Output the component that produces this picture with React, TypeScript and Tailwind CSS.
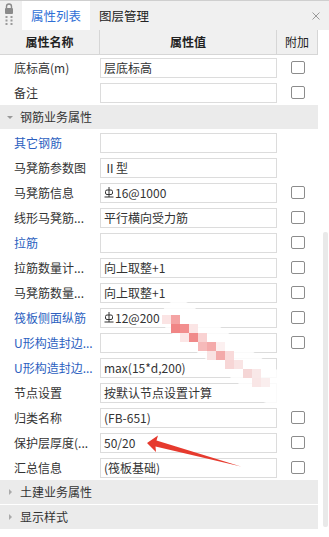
import React from "react";

type Row = {
  label: string;
  value: string;
  blue?: boolean;
  rebar?: boolean;
  check: boolean;
};

const baseRows: Row[] = [
  { label: "底标高(m)", value: "层底标高", check: true },
  { label: "备注", value: "", check: true },
];

const rebarRows: Row[] = [
  { label: "其它钢筋", value: "", blue: true, check: false },
  { label: "马凳筋参数图", value: "Ⅱ型", check: false },
  { label: "马凳筋信息", value: "16@1000", rebar: true, check: true },
  { label: "线形马凳筋...", value: "平行横向受力筋", check: true },
  { label: "拉筋", value: "", blue: true, check: true },
  { label: "拉筋数量计...", value: "向上取整+1", check: true },
  { label: "马凳筋数量...", value: "向上取整+1", check: true },
  { label: "筏板侧面纵筋", value: "12@200", blue: true, rebar: true, check: true },
  { label: "U形构造封边...", value: "", blue: true, check: true },
  { label: "U形构造封边...", value: "max(15*d,200)", blue: true, check: false },
  { label: "节点设置", value: "按默认节点设置计算", check: false },
  { label: "归类名称", value: "(FB-651)", check: true },
  { label: "保护层厚度(...", value: "50/20", check: true },
  { label: "汇总信息", value: "(筏板基础)", check: true },
];

// pixelated smudge over the value column
const mosaic: [number, number, string][] = [
  [162, 315, "#fbe4e4"], [171, 315, "#f4a3a3"],
  [171, 324, "#f08585"], [180, 324, "#f28e8e"], [189, 324, "#fbe5e5"],
  [180, 333, "#fce6e6"], [189, 333, "#f08a8a"], [198, 333, "#f9d2d2"],
  [198, 342, "#f6baba"], [207, 342, "#f4aaaa"], [216, 342, "#fcf0f0"],
  [207, 351, "#f9e2e2"], [216, 351, "#f3aaaa"], [225, 351, "#f9dada"],
  [225, 360, "#f7d6d6"], [234, 360, "#f9e4e4"],
  [243, 369, "#f5d6d6"], [252, 369, "#f9e8e8"],
  [252, 378, "#f9e6e6"], [261, 378, "#faeeee"],
];

function RebarGlyph() {
  return (
    <svg width="10" height="11" viewBox="0 0 10 11" className="mr-[1px] shrink-0">
      <rect x="1.5" y="3" width="7" height="4.5" rx="1.5" fill="none" stroke="#333" strokeWidth="1" />
      <line x1="5" y1="0" x2="5" y2="10" stroke="#333" strokeWidth="1" />
      <line x1="0.5" y1="10" x2="9.5" y2="10" stroke="#333" strokeWidth="1" />
    </svg>
  );
}

function Checkbox() {
  return <div className="w-[14px] h-[13px] border border-[#8c8c8c] rounded-[2px] bg-white" />;
}

function PropRow({ row }: { row: Row }) {
  return (
    <div className="flex h-[25px] items-center">
      <div
        className={`w-[100px] pl-[14px] whitespace-nowrap ${
          row.blue ? "text-[#2c5fbf]" : "text-[#333]"
        }`}
      >
        {row.label}
      </div>
      <div className="w-[177px] h-[20px] border border-[#dcdcdc] bg-white flex items-center pl-[3px] text-[#333] whitespace-nowrap">
        {row.rebar && <RebarGlyph />}
        {row.value}
      </div>
      <div className="w-[41px] flex justify-center pl-[1px]">{row.check && <Checkbox />}</div>
    </div>
  );
}

function Section({ title, open }: { title: string; open?: boolean }) {
  return (
    <div className="h-[25px] border-b border-white bg-[#ebebeb] flex items-center text-[#333]">
      <div className="w-[20px] flex justify-center">
        {open ? (
          <div className="w-0 h-0 border-l-[3px] border-r-[3px] border-t-[3px] border-l-transparent border-r-transparent border-t-[#999]" />
        ) : (
          <div className="w-0 h-0 border-t-[3px] border-b-[3px] border-l-[3px] border-t-transparent border-b-transparent border-l-[#aaa]" />
        )}
      </div>
      <span>{title}</span>
    </div>
  );
}

function LockGrip() {
  return (
    <svg width="22" height="30" viewBox="0 0 22 30">
      <path d="M6.5 8 V6.5 a2.5 2.5 0 0 1 5 0 V8" fill="none" stroke="#8a8a8a" strokeWidth="1.4" />
      <rect x="5" y="8" width="8" height="6" rx="1" fill="#8a8a8a" />
      {[17, 20.5, 24].map((y) =>
        [6.5, 11.5].map((x) => <rect key={`${x}-${y}`} x={x - 1} y={y - 1} width="2" height="2" fill="#9a9a9a" />)
      )}
    </svg>
  );
}

export default function App() {
  return (
    <div
      className="relative w-[329px] h-[537px] bg-white overflow-hidden text-[12px] leading-[16px]"
      style={{ fontFamily: '"Noto Sans CJK SC", "Noto Sans", sans-serif' }}
    >
      {/* tab bar */}
      <div className="h-[30px] bg-[#f0f0f0] border-t border-[#cfcfcf] flex items-stretch">
        <div className="w-[22px] -mt-[1px]">
          <LockGrip />
        </div>
        <div className="w-[68px] bg-white flex items-center justify-center text-[#2f6fd6] text-[12.5px]">属性列表</div>
        <div className="w-[68px] flex items-center justify-center text-[#222] text-[12.5px]">图层管理</div>
        <div className="ml-auto mr-[9px] flex items-center">
          <svg width="8" height="8" viewBox="0 0 8 8">
            <path d="M0.5 0.5 L7.5 7.5 M7.5 0.5 L0.5 7.5" stroke="#9a9a9a" strokeWidth="1" />
          </svg>
        </div>
      </div>

      <div className="flex">
        <div className="w-[318px]">
          {/* header */}
          <div className="flex h-[25px] bg-[#f0f0f0] border-b border-[#d6d6d6] text-[#222] font-bold">
            <div className="w-[100px] border-r border-[#d6d6d6] flex items-center justify-center">属性名称</div>
            <div className="w-[177px] border-r border-[#d6d6d6] flex items-center justify-center">属性值</div>
            <div className="w-[41px] border-r border-[#d6d6d6] flex items-center justify-center font-normal">附加</div>
          </div>

          {baseRows.map((r, i) => (
            <PropRow key={i} row={r} />
          ))}
          <Section title="钢筋业务属性" open />
          {rebarRows.map((r, i) => (
            <PropRow key={i} row={r} />
          ))}
          <Section title="土建业务属性" />
          <Section title="显示样式" />
        </div>
        <div className="w-[11px] pt-[202px]">
          <div className="ml-[5px] w-[5px] h-[295px] rounded-[2px] bg-[#e9e9e9]" />
        </div>
      </div>

      {/* smudge overlay */}
      <div className="absolute left-[150px] top-[335px] w-[150px] h-[34px] rounded-full bg-white/85 rotate-[37deg]" />
      {mosaic.map(([x, y, c], i) => (
        <div key={i} className="absolute w-[9px] h-[9px]" style={{ left: x, top: y, backgroundColor: c }} />
      ))}

      {/* annotation arrow */}
      <svg className="absolute left-0 top-0 pointer-events-none" width="329" height="537" viewBox="0 0 329 537">
        <polygon
          points="147,443 158,435.5 156.5,440.5 241,466.5 155.5,446.5 156,452"
          fill="#e63a2e"
        />
      </svg>
    </div>
  );
}
